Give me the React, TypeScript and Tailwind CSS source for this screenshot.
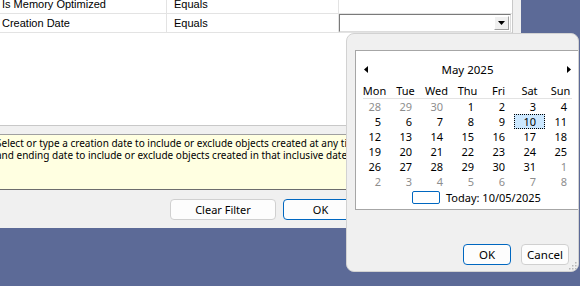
import React from 'react';

const segoe = { fontFamily: '"Noto Sans", "Open Sans", sans-serif' };

type Day = { n: number; muted?: boolean; selected?: boolean };

const weeks: Day[][] = [
  [{ n: 28, muted: true }, { n: 29, muted: true }, { n: 30, muted: true }, { n: 1 }, { n: 2 }, { n: 3 }, { n: 4 }],
  [{ n: 5 }, { n: 6 }, { n: 7 }, { n: 8 }, { n: 9 }, { n: 10, selected: true }, { n: 11 }],
  [{ n: 12 }, { n: 13 }, { n: 14 }, { n: 15 }, { n: 16 }, { n: 17 }, { n: 18 }],
  [{ n: 19 }, { n: 20 }, { n: 21 }, { n: 22 }, { n: 23 }, { n: 24 }, { n: 25 }],
  [{ n: 26 }, { n: 27 }, { n: 28 }, { n: 29 }, { n: 30 }, { n: 31 }, { n: 1, muted: true }],
  [{ n: 2, muted: true }, { n: 3, muted: true }, { n: 4, muted: true }, { n: 5, muted: true }, { n: 6, muted: true }, { n: 7, muted: true }, { n: 8, muted: true }],
];

const dayNames = ['Mon', 'Tue', 'Wed', 'Thu', 'Fri', 'Sat', 'Sun'];

const FilterRow: React.FC<{ name: string; op: string; combo?: boolean }> = ({ name, op, combo }) => (
  <div className="flex h-[19px] border-b border-[#e3e3e3]">
    <div className="w-[167px] border-r border-[#e3e3e3] pl-[2px] flex items-center">{name}</div>
    <div className="w-[172px] border-r border-[#e3e3e3] pl-[7px] flex items-center">{op}</div>
    <div className="flex-1 flex items-center">
      {combo && (
        <div className="w-[172px] h-[18px] border border-t-[#7a7a7a] border-l-[#7a7a7a] border-r-[#dcdcdc] border-b-[#dcdcdc] bg-white flex items-center justify-end pr-[1px]">
          <div className="w-[15px] h-[14px] bg-[#f0f0f0] border border-t-white border-l-white border-r-[#a0a0a0] border-b-[#a0a0a0] flex items-center justify-center">
            <svg width="7" height="4" viewBox="0 0 7 4">
              <path d="M0 0h7L3.5 4z" fill="#000" />
            </svg>
          </div>
        </div>
      )}
    </div>
  </div>
);

const DatePopup: React.FC = () => (
  <div
    className="absolute left-[346px] top-[33px] w-[233px] h-[239px] rounded-[8px] border border-[#d2d2d2] bg-[#f0f0f0] overflow-hidden flex flex-col"
    style={segoe}
  >
    {/* Calendar */}
    <div className="mt-[16px] ml-[8px] w-[240px] h-[160px] border border-[#a6a6a6] bg-white text-[11px] leading-[15px] text-black">
      <div className="pl-[3px] w-[220px]">
        <div className="h-[20px] mt-[8px] flex items-center justify-between px-[5px]">
          <svg width="4" height="7" viewBox="0 0 4 7">
            <path d="M4 0v7L0 3.5z" fill="#000" />
          </svg>
          <span className="text-[11.5px]">May 2025</span>
          <svg width="4" height="7" viewBox="0 0 4 7">
            <path d="M0 0v7l4-3.5z" fill="#000" />
          </svg>
        </div>
        <div className="mt-[5px] grid grid-cols-7 h-[14px] items-center">
          {dayNames.map((d) => (
            <div key={d} className="text-center leading-[14px]">{d}</div>
          ))}
        </div>
        <div className="mx-[4px] h-px bg-[#e3e3e3]" />
        {weeks.map((w, i) => (
          <div key={i} className="grid grid-cols-7 h-[15px]">
            {w.map((d, j) => (
              <div
                key={j}
                className={
                  d.selected
                    ? 'flex items-center justify-end pr-[8px] bg-[#cce8ff] border border-dotted border-black leading-[13px]'
                    : 'flex items-center justify-end pr-[9px] leading-[15px] ' + (d.muted ? 'text-[#8e8e8e]' : '')
                }
              >
                {d.n}
              </div>
            ))}
          </div>
        ))}
        <div className="mt-[2px] flex items-center ml-[53px] gap-[6px]">
          <div className="w-[28px] h-[13px] rounded-[2px] border border-[#0067c0]" />
          <span className="leading-[13px]">Today: 10/05/2025</span>
        </div>
      </div>
    </div>

    {/* Buttons */}
    <div className="mt-[34px] flex justify-end gap-[10px] pr-[9px] text-[11.5px]">
      <button className="w-[48px] h-[21px] rounded-[4px] border border-[#0067c0] bg-[#fdfdfd] leading-none">OK</button>
      <button className="w-[48px] h-[21px] rounded-[4px] border border-[#d0d0d0] bg-[#fdfdfd] leading-none">Cancel</button>
    </div>

    {/* Size grip */}
    <svg className="absolute right-[1px] bottom-[1px]" width="9" height="9" viewBox="0 0 9 9">
      <rect x="7" y="1" width="1.5" height="1.5" fill="#b8b8b8" />
      <rect x="4" y="4" width="1.5" height="1.5" fill="#b8b8b8" />
      <rect x="7" y="4" width="1.5" height="1.5" fill="#b8b8b8" />
      <rect x="1" y="7" width="1.5" height="1.5" fill="#b8b8b8" />
      <rect x="4" y="7" width="1.5" height="1.5" fill="#b8b8b8" />
      <rect x="7" y="7" width="1.5" height="1.5" fill="#b8b8b8" />
    </svg>
  </div>
);

const App: React.FC = () => {
  return (
    <div className="relative w-[580px] h-[286px] overflow-hidden bg-[#5c6a97]">
      {/* Filter dialog behind */}
      <div className="w-[521px] h-[228px] bg-[#f0f0f0] flex flex-col overflow-hidden">
        <div
          className="shrink-0 w-[513px] h-[131px] bg-white border-r border-b border-[#c8c8c8] -mt-[5px] text-[11px] text-black overflow-hidden"
          style={{ fontFamily: '"Liberation Sans", Arial, sans-serif' }}
        >
          <FilterRow name="Is Memory Optimized" op="Equals" />
          <FilterRow name="Creation Date" op="Equals" combo />
        </div>

        {/* Description box (right part hidden under the date popup) */}
        <div className="shrink-0 mt-[8px] w-[512px] h-[56px] bg-[#ffffe1] border-t border-b border-t-[#a0a0a0] border-b-[#6d6d6d]">
          <div className="w-[346px] h-full overflow-hidden text-[10px] text-black leading-[12px]" style={segoe}>
            <p className="-ml-[4px] pt-[2px] whitespace-nowrap">
              Select or type a creation date to include or exclude objects created at any time
            </p>
            <p className="-ml-[4px] whitespace-nowrap">
              and ending date to include or exclude objects created in that inclusive date
            </p>
          </div>
        </div>

        {/* Dialog buttons */}
        <div className="shrink-0 mt-[9px] flex gap-[7px] pl-[170px] text-[11px]" style={segoe}>
          <button className="w-[106px] h-[21px] rounded-[4px] border border-[#d0d0d0] bg-[#fdfdfd] leading-none">Clear Filter</button>
          <button className="w-[75px] h-[21px] rounded-[4px] border border-[#0067c0] bg-[#fdfdfd] leading-none">OK</button>
        </div>
      </div>

      <DatePopup />
    </div>
  );
};

export default App;
